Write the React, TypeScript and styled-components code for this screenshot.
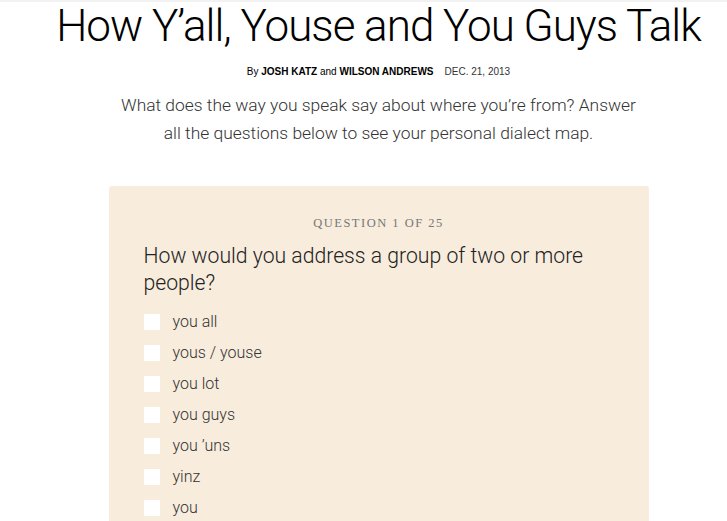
import React, {FC, useState} from "react";
import styled, {createGlobalStyle} from "styled-components";

const GlobalStyle = createGlobalStyle`
  body {
    margin: 0;
    background: #fff;
    font-family: "Liberation Sans", Arial, sans-serif;
  }
`;

const Page = styled.div`
  padding: 0 0 0 30px;
  display: flex;
  flex-direction: column;
  align-items: center;
  box-shadow: inset 0 2px 0 #f2f2f2;
`;

const Headline = styled.h1`
  margin: 0;
  font-family: Roboto, "Liberation Sans", sans-serif;
  font-weight: 300;
  font-size: 44px;
  line-height: 52px;
  letter-spacing: -1px;
  color: #000;
  white-space: nowrap;
`;

const Byline = styled.div`
  margin-top: 14px;
  font-size: 10px;
  color: #000;
  display: flex;
  gap: 11px;

  & b {
    font-weight: 700;
  }
`;

const Dateline = styled.span`
  color: #333;
`;

const Intro = styled.p`
  margin: 14px 0 0;
  width: 528px;
  text-align: center;
  font-family: Roboto, "Liberation Sans", sans-serif;
  font-weight: 300;
  font-size: 17.4px;
  line-height: 28px;
  color: #333;
`;

const Card = styled.section`
  margin-top: 39px;
  width: 540px;
  box-sizing: border-box;
  background: #f8ecdd;
  border-radius: 3px;
  padding: 30px 35px 0;
  min-height: 360px;
`;

const Counter = styled.div`
  text-align: center;
  font-family: "Liberation Serif", "DejaVu Serif", serif;
  font-size: 12.5px;
  letter-spacing: 1.5px;
  color: #777;
`;

const Question = styled.h2`
  margin: 11px 0 10px;
  font-family: Roboto, "Liberation Sans", sans-serif;
  font-weight: 300;
  font-size: 21.2px;
  line-height: 27px;
  color: #222;
`;

const Options = styled.ul`
  list-style: none;
  margin: 0;
  padding: 0;
`;

const Option = styled.li`
  display: flex;
  align-items: center;
  height: 31px;
  font-family: Roboto, "Liberation Sans", sans-serif;
  font-weight: 300;
  font-size: 16px;
  color: #333;
  cursor: pointer;
`;

const Box = styled.span<{checked: boolean}>`
  width: 16px;
  height: 16px;
  background: ${p => p.checked ? "#333" : "#fff"};
  margin-right: 13px;
  flex-shrink: 0;
`;

const answers = ["you all", "yous / youse", "you lot", "you guys", "you \u2019uns", "yinz", "you"];

const App: FC = () => {
    const [picked, setPicked] = useState<number>(-1);

    return (
        <Page>
            <GlobalStyle/>
            <Headline>How Y’all, Youse and You Guys Talk</Headline>
            <Byline>
                <span>By <b>JOSH KATZ</b> and <b>WILSON ANDREWS</b></span>
                <Dateline>DEC. 21, 2013</Dateline>
            </Byline>
            <Intro>
                What does the way you speak say about where you’re from? Answer all the questions below to see your personal dialect map.
            </Intro>
            <Card>
                <Counter>QUESTION 1 OF 25</Counter>
                <Question>How would you address a group of two or more people?</Question>
                <Options>
                    {answers.map((a, i) =>
                        <Option key={a} onClick={() => setPicked(i)}>
                            <Box checked={picked === i}/>
                            {a}
                        </Option>
                    )}
                </Options>
            </Card>
        </Page>
    )
}

export default App;
